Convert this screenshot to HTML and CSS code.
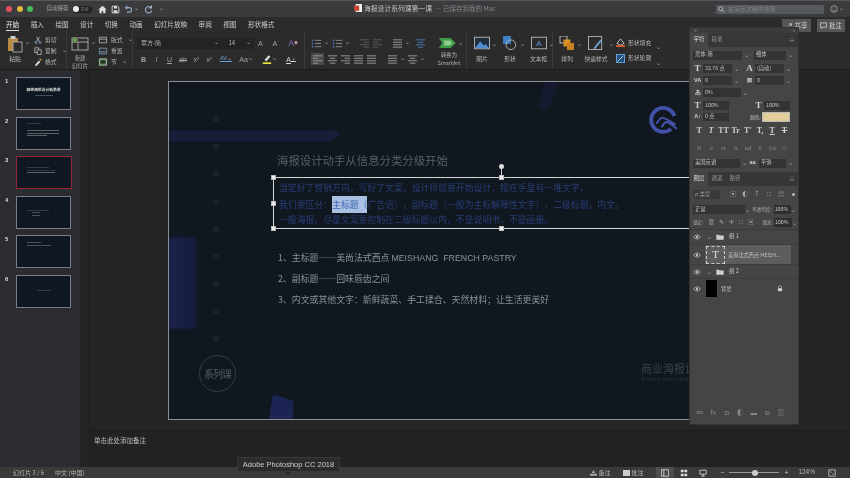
FILE: index.html
```html
<!DOCTYPE html>
<html lang="zh">
<head>
<meta charset="utf-8">
<title>海报设计系列课第一课</title>
<link rel="stylesheet" href="styles.css">
</head>
<body>
<svg class="defs" width="0" height="0">
  <symbol id="i-left" viewBox="0 0 12 12"><path d="M1 2h10M1 4.700h6M1 7.400h10M1 10h6" stroke="currentColor" fill="none"/></symbol>
  <symbol id="i-center" viewBox="0 0 12 12"><path d="M1 2h10M3 4.700h6M1 7.400h10M3 10h6" stroke="currentColor" fill="none"/></symbol>
  <symbol id="i-right" viewBox="0 0 12 12"><path d="M1 2h10M5 4.700h6M1 7.400h10M5 10h6" stroke="currentColor" fill="none"/></symbol>
  <symbol id="i-just" viewBox="0 0 12 12"><path d="M1 2h10M1 4.700h10M1 7.400h10M1 10h10" stroke="currentColor" fill="none"/></symbol>
  <symbol id="i-list" viewBox="0 0 14 12"><path d="M5 2h8M5 6h8M5 10h8" stroke="currentColor" fill="none"/><path d="M1 1h2v2H1zM1 5h2v2H1zM1 9h2v2H1z" fill="#4a79b8"/></symbol>
  <symbol id="i-eye" viewBox="0 0 12 8"><path d="M1 4c2.500-4 7.500-4 10 0-2.500 4-7.500 4-10 0z" fill="none" stroke="currentColor"/><circle cx="6" cy="4" r="1.600" fill="currentColor"/></symbol>
  <symbol id="i-folder" viewBox="0 0 12 9"><path d="M.5 8.500V1h4l1 1.300h6v6.200z" fill="currentColor"/></symbol>
</svg>

<div class="app">
  <header class="titlebar">
    <div class="tb-left">
      <span class="light red"></span><span class="light yellow"></span><span class="light green"></span>
      <span class="autosave">自动保存</span>
      <span class="toggle"><i></i><em>关闭</em></span>
      <svg class="qa q-home" viewBox="0 0 12 12"><path d="M6 1 .5 6H2v5h3V8h2v3h3V6h1.500z" fill="#ddd"/></svg>
      <svg class="qa" viewBox="0 0 12 12"><path d="M1.500 1.500h7l2 2v7h-9z" fill="none" stroke="#ddd" stroke-width="1.200"/><path d="M4 1.500h4v3H4zM3.500 7h5v3.500h-5z" fill="#ddd"/></svg>
      <svg class="qa" viewBox="0 0 12 12"><path d="M2 3.500h5a3 3 0 0 1 0 6H4M4.500 1 2 3.500 4.500 6" fill="none" stroke="#8fa9c4" stroke-width="1.400"/></svg>
      <span class="caret-s">⌄</span>
      <svg class="qa" viewBox="0 0 12 12"><path d="M9.500 3.500A4.300 4.300 0 1 0 10.500 7M10 .8v3H7" fill="none" stroke="#9fb4c9" stroke-width="1.400"/></svg>
      <span class="caret-s last">⌄</span>
    </div>
    <div class="tb-title">
      <svg class="docicon" viewBox="0 0 10 10"><rect x="2" y="0" width="8" height="10" fill="#eee"/><rect x="0" y="2" width="6.500" height="6.500" fill="#c8452f"/></svg>
      <span class="tb-name">海报设计系列课第一课</span><span class="tb-saved">— 已保存到我的 Mac</span>
    </div>
    <div class="tb-right">
      <div class="search"><svg class="mag" viewBox="0 0 10 10"><circle cx="4" cy="4" r="2.800" fill="none" stroke="#c5c8cc" stroke-width="1.200"/><path d="M6 6l3 3" stroke="#c5c8cc" stroke-width="1.200"/></svg><span>在演示文稿中搜索</span></div>
      <svg class="smile" viewBox="0 0 12 12"><circle cx="6" cy="6" r="5" fill="none" stroke="#bbb"/><path d="M3.500 7.500c1.500 1.500 3.500 1.500 5 0M4 4.500h1M7 4.500h1" stroke="#bbb" fill="none"/></svg>
      <span class="caret-s">⌄</span>
    </div>
  </header>

  <nav class="tabs">
    <span class="tab on">开始</span><span class="tab">插入</span><span class="tab">绘图</span><span class="tab">设计</span><span class="tab">切换</span><span class="tab">动画</span><span class="tab">幻灯片放映</span><span class="tab">审阅</span><span class="tab">视图</span><span class="tab">形状格式</span>
  </nav>

  <section class="ribbon">
    <div class="grp g-clip">
      <div class="big">
        <svg class="big-ic" viewBox="0 0 16 18"><rect x="1" y="3" width="10" height="13" fill="#b58a44"/><rect x="3.500" y="1" width="5" height="3" fill="#ccc"/><rect x="6" y="7" width="9" height="10" fill="#2c2c2c" stroke="#bbb" stroke-width=".8"/></svg>
        <span class="lbl">粘贴</span>
      </div>
      <span class="caret big-caret">⌄</span>
      <div class="stack">
        <span class="si"><svg viewBox="0 0 10 10"><path d="M3 1l4 6M7 1 3 7" stroke="#bbb" fill="none"/><circle cx="2.500" cy="8" r="1.300" fill="none" stroke="#7fa5d0"/><circle cx="7.500" cy="8" r="1.300" fill="none" stroke="#7fa5d0"/></svg>剪切</span>
        <span class="si"><svg viewBox="0 0 10 10"><path d="M1 1h5v6H1z" fill="none" stroke="#bbb"/><path d="M4 3.500h5v6H4z" fill="#2c2c2c" stroke="#bbb"/></svg>复制<b class="caret">⌄</b></span>
        <span class="si"><svg viewBox="0 0 10 10"><path d="M1 9 6 3l2 2-5 5z" fill="#ddd"/><path d="M6 1h3v3z" fill="#d6a63c"/></svg>格式</span>
      </div>
    </div>
    <div class="grp g-slide">
      <div class="big">
        <svg class="big-ic wide" viewBox="0 0 18 14"><rect x="1" y="1" width="16" height="12" fill="none" stroke="#a5a5a5"/><path d="M1 5h16M7 5v8" stroke="#a5a5a5"/><path d="M4 0v6M1 3h6" stroke="#6fb04f" stroke-width="1.400"/></svg>
        <span class="lbl two">新建<br>幻灯片</span>
      </div>
      <span class="caret big-caret">⌄</span>
      <div class="stack">
        <span class="si wide"><svg viewBox="0 0 10 10"><path d="M.5 1.500h9v7h-9zM.5 4h9" fill="none" stroke="#bbb"/></svg>版式<b class="caret">⌄</b></span>
        <span class="si wide"><svg viewBox="0 0 10 10"><path d="M.5 1.500h9v7h-9z" fill="none" stroke="#7fa5d0"/><path d="M2 6h6" stroke="#bbb"/></svg>重置</span>
        <span class="si wide"><svg viewBox="0 0 10 10"><path d="M.5 1h9v8h-9z" fill="#4c8a46" stroke="#bbb"/><path d="M2 3h6v4H2z" fill="#2c2c2c"/></svg>节<b class="caret">⌄</b></span>
      </div>
    </div>
    <div class="grp g-font">
      <div class="row">
        <span class="fontsel"><span>苹方-简</span><b class="caret">⌄</b></span>
        <span class="sizesel"><span>14</span><b class="caret">⌄</b></span>
        <span class="g w15">A<sup>ˆ</sup></span><span class="g w15">A<sup>ˇ</sup></span>
        <span class="g w22 clear">A<i>◆</i></span>
      </div>
      <div class="row r2">
        <span class="g w13 bd">B</span><span class="g w13 it">I</span><span class="g w13 ul">U</span><span class="g w14 st">ab</span><span class="g w13">x<sup>2</sup></span><span class="g w13">x<sub>2</sub></span>
        <span class="g w17 av">AV<b class="caret">⌄</b></span><span class="g w24">Aa<b class="caret">⌄</b></span>
        <span class="g w20"><svg class="hl" viewBox="0 0 12 12"><path d="M3 7 8 1.500l2 1.800L5 9z" fill="#ddd"/><rect x="1" y="10" width="10" height="2" fill="#e8e23a"/></svg><b class="caret">⌄</b></span>
        <span class="g w18 fc">A<b class="caret">⌄</b></span>
      </div>
    </div>
    <div class="grp g-para">
      <div class="pcol">
        <div class="row">
          <svg class="pi m1x"><use href="#i-list"/></svg><b class="caret cw">⌄</b>
          <svg class="pi m1x"><use href="#i-list"/></svg><b class="caret cw">⌄</b>
          <svg class="pi dim m7"><use href="#i-right"/></svg>
          <svg class="pi dim m2x"><use href="#i-left"/></svg>
          <svg class="pi m9"><use href="#i-just"/></svg><b class="caret cw">⌄</b>
          <svg class="pi blue m3x"><use href="#i-center"/></svg>
        </div>
        <div class="row r2">
          <span class="pa m1x"><svg class="pi"><use href="#i-left"/></svg></span>
          <svg class="pi m3x"><use href="#i-center"/></svg>
          <svg class="pi m2x"><use href="#i-right"/></svg>
          <svg class="pi m2x"><use href="#i-just"/></svg>
          <svg class="pi m2x"><use href="#i-just"/></svg>
          <svg class="pi m10"><use href="#i-just"/></svg><b class="caret cw">⌄</b>
          <svg class="pi"><use href="#i-center"/></svg><b class="caret cw">⌄</b>
        </div>
      </div>
      <div class="big smart">
        <svg class="sm-ic" viewBox="0 0 26 14"><path d="M1 1h14l6 6-6 6H1l4-6z" fill="#3f9a48"/><path d="M6 4h8l3 3-3 3H6l2-3z" fill="#8fd08a"/></svg>
        <span class="lbl two">转换为<br>SmartArt</span>
      </div>
      <span class="caret smart-c">⌄</span>
    </div>
    <div class="grp g-ins">
      <div class="big ins">
        <svg class="ins-ic" viewBox="0 0 18 14"><rect x=".5" y=".5" width="17" height="13" fill="#20303f" stroke="#bbb"/><path d="M1 13 7 5l4 5 2-2 4 5z" fill="#4f8fd0"/></svg>
        <span class="lbl">图片</span>
      </div><span class="caret">⌄</span>
      <div class="big ins">
        <svg class="ins-ic" viewBox="0 0 18 16"><rect x="1" y="0" width="9" height="9" fill="#3f7fc4"/><circle cx="10" cy="10" r="5.500" fill="none" stroke="#bbb"/></svg>
        <span class="lbl">形状</span>
      </div><span class="caret">⌄</span>
      <div class="big ins last">
        <svg class="ins-ic" viewBox="0 0 18 14"><rect x=".5" y=".5" width="17" height="13" fill="none" stroke="#bbb"/><text x="9" y="10.500" text-anchor="middle" font-size="9" fill="#5a9ae0" font-family="Liberation Sans">A</text></svg>
        <span class="lbl">文本框</span>
      </div><span class="caret">⌄</span>
    </div>
    <div class="grp g-draw">
      <div class="big ins">
        <svg class="ins-ic" viewBox="0 0 18 16"><rect x="1" y="0" width="8" height="8" fill="#2b2b2b" stroke="#ccc"/><rect x="5" y="4" width="8" height="8" fill="#d8922a"/><rect x="9" y="8" width="8" height="8" fill="#c98420"/></svg>
        <span class="lbl">排列</span>
      </div><span class="caret">⌄</span>
      <div class="big ins qs">
        <svg class="ins-ic" viewBox="0 0 18 16"><rect x=".5" y=".5" width="15" height="15" fill="none" stroke="#bbb"/><path d="M6 14 14 4l1.500 1.500L8 15z" fill="#6f9fd0"/></svg>
        <span class="lbl">快速样式</span>
      </div><span class="caret">⌄</span>
      <div class="stack fill">
        <span class="si"><svg viewBox="0 0 10 10"><path d="M5 1 9 6 5 8 1 6z" fill="none" stroke="#ccc"/><rect y="8" width="10" height="2" fill="#d8622f"/></svg>形状填充<b class="caret">⌄</b></span>
        <span class="si"><svg viewBox="0 0 10 10"><rect x=".5" y=".5" width="9" height="9" fill="#1f4f80" stroke="#6fa8e0"/><path d="M2 8 8 2" stroke="#ddd"/></svg>形状轮廓<b class="caret">⌄</b></span>
      </div>
    </div>
  </section>

  <main class="main">
    <aside class="sidebar">
      <div class="tr"><span class="n">1</span><div class="thumb t1"><span class="tt">释放海报设计新思维</span><span class="ts"></span></div></div>
      <div class="tr"><span class="n">2</span><div class="thumb t2"><span class="bar b0"></span><span class="bar b1"></span><span class="bar b2"></span><span class="bar b3"></span></div></div>
      <div class="tr"><span class="n">3</span><div class="thumb sel"><span class="bar b4"></span><span class="bar b5"></span><span class="bar b6"></span></div></div>
      <div class="tr"><span class="n">4</span><div class="thumb"><span class="bar b4"></span><span class="bar b7"></span><span class="bar b7"></span></div></div>
      <div class="tr"><span class="n">5</span><div class="thumb t5"><span class="bar b8"></span><span class="bar b9"></span></div></div>
      <div class="tr"><span class="n">6</span><div class="thumb t6"><span class="bar b10"></span></div></div>
    </aside>
    <div class="workspace">
      <div class="stage">
        <div class="slide">
          <i class="deco d-bar"></i><i class="deco d-left"></i><i class="deco d-bot"></i><i class="deco d-slash"></i>
          <div class="dots"><i></i><i></i><i></i><i></i><i></i><i></i><i></i><i></i><i></i></div>
          <svg class="q-logo" viewBox="0 0 34 34"><path d="M27 28A14 14 0 1 1 31 13" fill="none" stroke="#4450a6" stroke-width="4.500"/><path d="M10 22Q14 15 17 15T32 23M16 26Q19 20 22 20T34 28" fill="none" stroke="#4450a6" stroke-width="2.500"/></svg>
          <div class="bad"><span>系列课</span></div>
          <div class="wm"><span>商业海报设计</span><small>Business poster design</small></div>

          <h1 class="s-title">海报设计动手从信息分类分级开始</h1>
          <div class="s-box">
            <p>当定好了营销方向，写好了文案，设计师就要开始设计，摆在手里有一堆文字，</p>
            <p>我们要区分：<mark>主标题（</mark>广告语），副标题（一般为主标解释性文字），二级标题，内文。</p>
            <p>一般海报，尽量文案要控制在二级标题以内，不是说明书，不是画册。</p>
            <i class="h tl"></i><i class="h tc"></i><i class="h tr2"></i><i class="h ml0"></i><i class="h mr"></i><i class="h bl"></i><i class="h bc"></i><i class="h br"></i>
            <i class="stem"></i><i class="rot"></i>
          </div>
          <ol class="s-list">
            <li>1、主标题——美尚法式西点 <span class="lat">MEISHANG&nbsp; FRENCH PASTRY</span></li>
            <li>2、副标题——回味唇齿之间</li>
            <li>3、内文或其他文字：新鲜蔬菜、手工揉合、天然材料；让生活更美好</li>
          </ol>
        </div>
      </div>
      <div class="notes">单击此处添加备注</div>
    </div>
  </main>

  <footer class="status">
    <div class="st-left"><span>幻灯片 3 / 6</span><span>中文 (中国)</span></div>
    <div class="st-right">
      <span class="st-i"><svg class="nt" viewBox="0 0 10 8"><path d="M0 8h10V5H0zM3 4h4V2H3zM4.500 2V0h1v2z" fill="#aaa"/></svg>备注</span><span class="st-i cm"><i></i>批注</span>
      <span class="view on"><svg viewBox="0 0 10 10"><path d="M.5 1h9v8h-9zM3.500 1v8" fill="none" stroke="#ddd"/></svg></span>
      <span class="view"><svg viewBox="0 0 10 10"><path d="M1 1h3.500v3H1zM5.500 1H9v3H5.500zM1 6h3.500v3H1zM5.500 6H9v3H5.500z" fill="#ddd"/></svg></span>
      <span class="view"><svg viewBox="0 0 10 10"><path d="M1 1.500h8v5H1zM5 6.500V9M3 9h4" fill="none" stroke="#ddd"/></svg></span>
      <span class="zoom"><b>−</b><span class="track"><i></i></span><b>+</b></span>
      <span class="pct">124%</span>
      <span class="view"><svg viewBox="0 0 10 10"><path d="M1 1h8v8H1z" fill="none" stroke="#ccc"/><path d="M3 3h1.500v1.500H3zM5.500 5.500H7V7H5.500z" fill="#ccc"/></svg></span>
    </div>
  </footer>
</div>

<div class="share"><svg viewBox="0 0 8 8"><path d="M1 7h4M3 5l3-3M3.500 2H6v2.500" fill="none" stroke="#ccc"/></svg>共享</div>
<div class="comment"><svg viewBox="0 0 8 8"><path d="M.5 1h7v5H3L1.500 7.500V6h-1z" fill="none" stroke="#ccc"/></svg>批注</div>

<aside class="ps">
  <div class="ps-strip"><i>×</i><i>»</i></div>
  <div class="ps-tabs"><span class="on">字符</span><span>段落</span><em>≡</em></div>
  <div class="ps-char">
    <div class="pr h14"><span class="f a1">黑体-简</span><b>⌄</b><span class="f a2">细体</span><b>⌄</b></div>
    <div class="pr h13"><u class="ti">T</u><span class="f s1">32.76 点</span><b>⌄</b><u class="ti ti2">A</u><span class="f s1">(自动)</span><b>⌄</b></div>
    <div class="pr h11"><u class="ti sm">VA</u><span class="f s1">0</span><b>⌄</b><u class="ti sm ti2">⊠</u><span class="f s1">0</span><b>⌄</b></div>
    <div class="pr h13"><u class="ti sm">あ</u><span class="f s3">0%</span><b>⌄</b></div>
    <div class="pr h13"><u class="ti">T</u><span class="f s4">100%</span><u class="ti tw">T</u><span class="f s4">100%</span></div>
    <div class="pr h10"><u class="ti sm">A↕</u><span class="f s4">0 点</span><span class="clbl">颜色:</span><span class="swatch"></span></div>
    <div class="pr tt-row"><span>T</span><span class="i">T</span><span>TT</span><span>Tr</span><span>T'</span><span>T,</span><span class="u">T</span><span class="s">T</span></div>
    <div class="pr tt-row dim"><span>fi</span><span>σ</span><span>st</span><span>A</span><span>ad</span><span>T</span><span>1st</span><span>½</span></div>
    <div class="pr h14"><span class="f l1">美国英语</span><b>⌄</b><u class="ti sm tl2">aa</u><span class="f l2">平滑</span><b>⌄</b></div>
  </div>
  <div class="ps-tabs"><span class="on">图层</span><span>通道</span><span>路径</span><em>≡</em></div>
  <div class="ps-layers">
    <div class="pr l-search"><span class="f q">ρ 类型</span><span class="fi-ic">▣</span><span class="fi-ic">◐</span><span class="fi-ic">T</span><span class="fi-ic">⛶</span><span class="fi-ic">▤</span><i class="dotg"></i></div>
    <div class="pr l-mode"><span class="f m1">正常</span><b>⌄</b><span class="lab">不透明度:</span><span class="f m2">100%</span><b>⌄</b></div>
    <div class="pr l-lock"><span class="lab">锁定:</span><span class="fi-ic">▦</span><span class="fi-ic">✎</span><span class="fi-ic">✛</span><span class="fi-ic">⛶</span><span class="fi-ic">▣</span><span class="lab ll">填充:</span><span class="f m3">100%</span><b>⌄</b></div>
    <div class="lay gr g1"><svg class="eye"><use href="#i-eye"/></svg><span class="tw2">⌄</span><svg class="fold"><use href="#i-folder"/></svg><span>组 1</span></div>
    <div class="lay txt"><svg class="eye"><use href="#i-eye"/></svg><span class="tthumb">T</span><span class="ln">美尚法式西点 MEISH...</span></div>
    <div class="lay gr g2"><svg class="eye"><use href="#i-eye"/></svg><span class="tw2">⌄</span><svg class="fold"><use href="#i-folder"/></svg><span>组 2</span></div>
    <div class="lay bgl"><svg class="eye"><use href="#i-eye"/></svg><span class="bthumb"></span><span class="ln">背景</span><svg class="lock" viewBox="0 0 10 10"><path d="M2.500 4.500v-2a2.500 2 0 0 1 5 0v2" fill="none" stroke="#ccc"/><rect x="1.500" y="4.500" width="7" height="5" fill="#ccc"/></svg></div>
    <div class="l-foot"><span>∞</span><span>fx</span><span>◘</span><span>◐</span><span>▬</span><span>⧉</span><span>▥</span></div>
  </div>
</aside>

<div class="tooltip">Adobe Photoshop CC 2018</div>
</body>
</html>
```

FILE: styles.css
```css
* { box-sizing: border-box; }
html, body { margin: 0; padding: 0; width: 850px; height: 478px; overflow: hidden; background: #232323; }
body { position: relative; font-family: "Noto Sans CJK SC", "Liberation Sans", sans-serif; color: #ccc; font-size: 7px; line-height: 1; filter: blur(.5px); text-spacing-trim: space-all; }
.defs { position: absolute; }
svg { display: block; flex: none; }
sup, sub { font-size: 60%; line-height: 0; }
.caret, .caret-s { font-weight: 400; font-size: 6px; color: #aaa; line-height: 1; transform: translateY(-1px); }

.app { width: 850px; height: 478px; display: flex; flex-direction: column; }

/* title bar */
.titlebar { height: 17px; flex: none; background: #3b3b3d; display: flex; align-items: center; position: relative; padding-left: 6px; border-top: 1px solid #55565a; }
.tb-left { display: flex; align-items: center; }
.light { width: 6px; height: 6px; border-radius: 50%; margin-right: 4.500px; }
.red { background: #e0525e; } .yellow { background: #dfb73c; } .green { background: #45bb5a; }
.autosave { font-size: 5.500px; color: #a8a8a8; margin-left: 9px; width: 26px; }
.toggle { width: 19px; height: 7px; background: #222; border-radius: 4px; display: flex; align-items: center; gap: 2px; }
.toggle i { width: 6px; height: 6px; background: #eee; border-radius: 50%; }
.toggle em { font-style: normal; font-size: 4px; color: #888; }
.qa { width: 9px; height: 9px; margin-left: 4px; }
.q-home { margin-left: 6px; }
.caret-s { margin: 0 1px; }
.caret-s.last { margin-left: 6px; }
.tb-title { flex: none; position: absolute; left: 354px; top: 3px; display: flex; align-items: center; font-size: 7px; }
.docicon { width: 8px; height: 8px; margin-right: 2px; }
.tb-name { color: #c4c4c4; font-size: 6.800px; }
.tb-saved { color: #85878a; font-size: 6.500px; margin-left: 3px; }
.tb-right { margin-left: auto; display: flex; align-items: center; padding-right: 5px; }
.search { width: 108px; height: 9px; background: #56595d; border-radius: 1px; display: flex; align-items: center; padding-left: 2px; gap: 3px; margin-right: 6px; }
.search span { font-size: 6px; color: #7f8388; }
.mag { width: 7px; height: 7px; }
.smile { width: 8px; height: 8px; }

/* tabs */
.tabs { height: 14px; flex: none; background: #2b2b2b; display: flex; align-items: center; padding-left: 6px; gap: 11.500px; font-size: 6.600px; color: #cfcfcf; }
.tab { height: 14px; line-height: 15px; }
.tab.on { color: #eee; box-shadow: inset 0 -1px 0 #ddd; }

/* ribbon */
.ribbon { height: 39px; flex: none; background: #2b2b2b; display: flex; border-bottom: 1px solid #1b1b1b; font-size: 5.800px; color: #b5b5b5; }
.grp { height: 38px; display: flex; align-items: flex-start; border-right: 1px solid #3b3b3b; flex: none; }
.big { display: flex; flex-direction: column; align-items: center; }
.big-ic { width: 16px; height: 18px; margin-top: 4px; }
.big-ic.wide { width: 18px; height: 14px; }
.lbl { margin-top: 3px; line-height: 6.500px; text-align: center; white-space: nowrap; }
.lbl.two { font-size: 5.300px; line-height: 7.500px; }
.big-caret { margin: 9px 1px 0 2px; }
.stack { display: flex; flex-direction: column; gap: 3.500px; padding-top: 5px; }
.si { height: 7.500px; display: flex; align-items: center; gap: 3px; white-space: nowrap; }
.si svg { width: 8px; height: 8px; }
.si .caret { margin-left: 2px; }
.g-clip { width: 67px; padding-left: 7px; }
.g-clip .stack { margin-left: 3px; }
.g-slide { width: 66px; padding-left: 4px; }
.g-slide .big { width: 20px; }
.g-slide .big-ic { margin-top: 6px; }
.g-slide .lbl { margin-top: 4px; }
.g-slide .stack { margin-left: 1px; }
.si.wide svg { width: 10px; height: 8px; }
.g-font { width: 172px; padding: 4px 0 0 4px; display: block; }
.row { height: 16px; display: flex; align-items: center; }
.fontsel { width: 88px; height: 11px; background: #232323; display: flex; align-items: center; justify-content: space-between; padding: 0 3px 0 4px; font-size: 6px; }
.sizesel { width: 32px; height: 11px; background: #232323; display: flex; align-items: center; justify-content: space-between; padding: 0 3px 0 6px; font-size: 6px; }
.g { text-align: center; font-family: "Liberation Sans", sans-serif; font-size: 7px; display: flex; align-items: center; justify-content: center; color: #a2a2a2; }
.w13 { width: 13px; } .w14 { width: 14px; } .w15 { width: 15px; } .w17 { width: 20px; } .w18 { width: 18px; } .w20 { width: 26px; } .w22 { width: 22px; } .w24 { width: 20px; }
.bd { font-weight: 700; } .it { font-style: italic; } .ul { text-decoration: underline; } .st { text-decoration: line-through; }
.r2 .g { height: 14px; }
.clear { color: #8a6fc0; font-size: 9px; }
.clear i { font-size: 4px; font-style: normal; color: #c9a; }
.av { color: #6b9fd4; text-decoration: underline; font-size: 5.500px; }
.hl { width: 10px; height: 10px; }
.fc { color: #ddd; text-decoration: underline; }
.g-para { width: 162px; padding: 4px 0 0 5px; }
.pcol { width: 122px; }
.pi { width: 11px; height: 11px; color: #9d9d9d; }
.dim { color: #5f5f5f; }
.blue { color: #4d7fb5; }
.cw { width: 9px; text-align: center; }
.m1x { margin-left: 1px; } .m2x { margin-left: 2px; } .m3x { margin-left: 3px; } .m7 { margin-left: 7px; } .m9 { margin-left: 9px; } .m10 { margin-left: 10px; }
.pa { background: #4a4a4a; width: 13px; height: 12px; display: flex; align-items: center; justify-content: center; }
.smart { width: 32px; margin-left: 1px; }
.sm-ic { width: 22px; height: 12px; margin-top: 2px; }
.smart .lbl { margin-top: 3px; }
.smart-c { margin: 6px 0 0 -7px; }
.g-ins { width: 86px; padding-left: 7px; }
.ins { width: 16px; }
.ins-ic { width: 16px; height: 14px; margin-top: 5px; }
.ins .lbl { margin-top: 6px; }
.g-ins .caret { margin: 11px 5px 0 2px; }
.g-draw .caret { margin: 11px 1px 0 2px; }
.ins.last { width: 18px; }
.g-draw { border: 0; padding-left: 6px; }
.qs { width: 22px; margin-left: 2px; }
.fill { margin-left: 1px; gap: 8px; padding-top: 8px; }
.fill .si svg { width: 9px; height: 9px; }

/* main */
.main { flex: 1; display: flex; min-height: 0; }
.sidebar { width: 80px; flex: none; background: #2a2c31; padding-top: 7px; display: flex; flex-direction: column; gap: 6.500px; }
.tr { display: flex; height: 33px; padding-left: 5px; }
.n { width: 11px; font-size: 6px; font-family: "Liberation Sans", sans-serif; font-weight: 700; color: #ddd; padding-top: 1px; }
.thumb { width: 55px; height: 33px; background: #0f1722; border: 1px solid #7c7c84; display: flex; flex-direction: column; align-items: flex-start; padding: 13px 0 0 10px; gap: 1.500px; }
.thumb.sel { border: 1.500px solid #8f2833; width: 56px; padding-top: 10px; }
.t1 { align-items: center; padding: 10px 0 0; }
.tt { font-size: 3.800px; font-weight: 700; color: #dcdcdc; white-space: nowrap; }
.ts { display: block; width: 18px; height: 1px; background: #474d5a; margin-top: 2px; }
.bar { display: block; height: 1px; background: #5d6269; }
.t2 { padding-top: 5px; }
.b0 { width: 14px; background: #333841; margin-bottom: 5px; }
.b1 { width: 32px; } .b2 { width: 32px; } .b3 { width: 20px; }
.b4 { width: 22px; background: #333841; } .b5 { width: 30px; background: #2a3450; } .b6 { width: 28px; background: #5d6269; }
.b7 { width: 8px; margin-left: 5px; background: #4d5259; }
.t5 { padding-top: 6px; }
.b8 { width: 14px; background: #4d5259; } .b9 { width: 24px; background: #4d5259; }
.t6 { padding: 14px 0 0 20px; } .b10 { width: 14px; background: #333841; }
.workspace { flex: 1; display: flex; flex-direction: column; min-width: 0; margin-left: 9px; border-left: 1px solid #1f1f1f; }
.stage { height: 361px; flex: none; background: #252525; padding: 11px 0 0 78px; overflow: hidden; border-bottom: 1px solid #1b1b1b; }
.notes { flex: 1; background: #222; font-size: 6.500px; color: #bdbdbd; padding: 6px 0 0 4px; }

/* slide: a free canvas */
.slide { width: 602px; height: 339px; background: #10171f; border: 1px solid #8c9096; position: relative; overflow: hidden; }
.deco { position: absolute; filter: blur(1.500px); }
.d-bar { left: -1px; top: 48px; width: 172px; height: 12px; background: #181e3a; clip-path: polygon(0 0, 94% 0, 97% -20%, 100% 40%, 94% 100%, 0 100%); }
.d-left { left: -1px; top: 155px; width: 28px; height: 92px; background: linear-gradient(90deg, #1b224c, #161c3c); }
.d-bot { left: 99px; top: 312px; width: 26px; height: 30px; background: #1c2454; clip-path: polygon(20% 0, 100% 25%, 95% 100%, 0 100%); }
.d-slash { left: 369px; top: -2px; width: 22px; height: 30px; background: #151a2e; clip-path: polygon(30% 0, 100% 0, 45% 100%, 0 100%); }
.dots { position: absolute; left: 44px; top: 34px; display: flex; flex-direction: column; gap: 22px; }
.dots i { display: block; width: 6px; height: 5.500px; background: #1a212b; border-radius: 1px; }
.q-logo { position: absolute; left: 479px; top: 23px; width: 29px; height: 29px; }
.bad { position: absolute; left: 30px; top: 273px; width: 37px; height: 37px; border: 1px solid #343b44; border-radius: 50%; display: flex; align-items: center; justify-content: center; }
.bad span { font-size: 10px; color: #555a60; letter-spacing: -1px; white-space: nowrap; }
.wm { position: absolute; left: 472px; top: 281px; display: flex; flex-direction: column; gap: 3px; white-space: nowrap; }
.wm span { font-size: 11px; color: #3c4149; }
.wm small { font-size: 5px; color: #2c3139; font-family: "Liberation Sans", sans-serif; }
.s-title { position: absolute; left: 108px; top: 70px; margin: 0; font-size: 11.400px; line-height: 16px; font-weight: 400; color: #5a5f66; white-space: nowrap; }
.s-box { position: absolute; left: 104px; top: 95px; width: 456px; height: 52px; border: 1px solid #d5d7da; padding: 2px 0 0 5px; color: #293e78; font-size: 8.850px; white-space: nowrap; }
.s-box p { margin: 0; height: 16px; line-height: 16px; }
.s-box mark { background: #a9c0e2; color: #3f66b2; display: inline-block; height: 17px; line-height: 17px; }
.h { position: absolute; width: 5px; height: 5px; background: #eee; border: 1px solid #bbb; }
.tl { left: -3px; top: -3px; } .tc { left: 225px; top: -3px; } .tr2 { right: -3px; top: -3px; }
.ml0 { left: -3px; top: 23px; } .mr { right: -3px; top: 23px; }
.bl { left: -3px; bottom: -3px; } .bc { left: 225px; bottom: -3px; } .br { right: -3px; bottom: -3px; }
.stem { position: absolute; left: 227px; top: -10px; width: 1px; height: 8px; background: #ccc; }
.rot { position: absolute; left: 225px; top: -14px; width: 5px; height: 5px; border-radius: 50%; background: #ddd; }
.s-list { position: absolute; left: 109px; top: 165px; margin: 0; padding: 0; list-style: none; font-size: 8.900px; color: #8d9298; white-space: nowrap; }
.s-list li { height: 21px; line-height: 21px; }
.lat { font-family: "Liberation Sans", sans-serif; font-size: 8.800px; }

/* status */
.status { height: 11px; flex: none; background: #3a3a3a; display: flex; align-items: center; justify-content: space-between; font-size: 6px; color: #b5b5b5; }
.st-left { display: flex; gap: 11px; padding-left: 13px; }
.st-right { display: flex; align-items: center; padding-right: 8px; }
.st-i { margin-right: 12px; display: flex; align-items: center; gap: 2px; white-space: nowrap; }
.nt { width: 7px; height: 6px; }
.cm i { width: 7px; height: 6px; background: #ccc; }
.view { width: 18px; height: 11px; display: flex; align-items: center; justify-content: center; margin-right: 1px; }
.view svg { width: 8px; height: 8px; }
.view.on { background: #4d4d4d; }
.zoom { display: flex; align-items: center; gap: 5px; margin-left: 8px; }
.zoom b { font-weight: 400; color: #ccc; font-size: 7px; }
.track { width: 50px; height: 1px; background: #999; position: relative; display: block; }
.track i { position: absolute; left: 23px; top: -2.500px; width: 6px; height: 6px; border-radius: 50%; background: #ccc; }
.pct { margin: 0 8px 0 10px; font-family: "Liberation Sans", sans-serif; font-size: 6.500px; }

/* floating bits over the window */
.share, .comment { position: absolute; top: 19px; height: 13px; background: #555; color: #d0d0d0; font-size: 6.500px; line-height: 6.500px; display: flex; align-items: flex-start; justify-content: center; gap: 2px; padding-top: 3px; }
.share svg, .comment svg { width: 7px; height: 7px; }
.share { left: 782px; width: 29px; }
.comment { left: 817px; width: 28px; }
.tooltip { position: absolute; left: 237px; top: 457px; width: 103px; height: 15px; background: #2b2b2b; border: 1px solid #3a3a3a; font-family: "Liberation Sans", sans-serif; font-size: 7.500px; color: #ccc; text-align: center; line-height: 13px; }
.tooltip::after { content: ""; position: absolute; left: 47px; top: 14px; border: 3px solid transparent; border-top-color: #2b2b2b; }

/* photoshop panel */
.ps { position: absolute; left: 689px; top: 27px; width: 110px; height: 398px; background: #454545; font-size: 5.500px; color: #c4c4c4; border: 1px solid #333; display: flex; flex-direction: column; }
.ps-strip { height: 5px; flex: none; background: #3c3c3c; display: flex; justify-content: space-between; padding: 0 3px; font-size: 4.500px; color: #999; }
.ps-strip i { font-style: normal; }
.ps-tabs { height: 14px; flex: none; background: #373737; display: flex; align-items: stretch; position: relative; }
.ps-tabs span { width: 18px; display: flex; align-items: center; justify-content: center; color: #999; }
.ps-tabs span.on { background: #454545; color: #ddd; }
.ps-tabs em { position: absolute; right: 3px; top: 4px; font-style: normal; font-size: 6px; color: #999; }
.ps-char { height: 125px; flex: none; padding: 1px 3px 0; }
.pr { display: flex; align-items: center; }
.h14 { height: 14px; } .h13 { height: 13px; } .h11 { height: 11px; } .h10 { height: 10px; }
.pr b { width: 8px; font-weight: 400; font-size: 6px; text-align: center; color: #aaa; }
.f { height: 9px; background: #333; display: flex; align-items: center; padding-left: 2px; white-space: nowrap; font-size: 5.300px; flex: none; }
.h11 .f, .h10 .f { height: 8.500px; }
.a1 { width: 49px; } .a2 { width: 32px; margin-left: 4px; }
.ti { width: 9px; text-decoration: none; font-family: "Liberation Serif", serif; font-size: 9px; font-weight: 700; text-align: center; color: #cfcfcf; margin-right: 1px; white-space: nowrap; }
.ti.sm { font-size: 5.500px; font-family: "Liberation Sans", sans-serif; }
.ti2 { margin-left: 5px; }
.s1 { width: 29px; }
.s3 { width: 38px; }
.s4 { width: 26px; }
.tw { margin-left: 25px; }
.clbl { margin-left: 21px; width: 12px; white-space: nowrap; font-size: 4.800px; }
.swatch { width: 28px; height: 10px; background: #e2cd9b; border: 1px solid #bbb; }
.tt-row { height: 18px; font-family: "Liberation Serif", serif; font-size: 8px; font-weight: 700; color: #cfcfcf; }
.tt-row span { width: 12.200px; text-align: center; }
.tt-row.dim { color: #777; font-size: 6.500px; height: 16px; }
.tt-row .i { font-style: italic; } .tt-row .u { text-decoration: underline; } .tt-row .s { text-decoration: line-through; }
.l1 { width: 47px; } .l2 { width: 27px; }
.tl2 { margin-right: 2px; }
.ps-layers { flex: 1; display: flex; flex-direction: column; min-height: 0; }
.l-search { padding: 0 3px; height: 17px; gap: 6px; }
.q { width: 27px; background: #3a3a3a; color: #999; margin-right: 4px; }
.fi-ic { font-size: 5.500px; color: #aaa; width: 6px; text-align: center; display: flex; justify-content: center; }
.dotg { width: 3px; height: 3px; background: #bbb; border-radius: 50%; margin-left: 2px; }
.l-mode { padding: 0 3px; height: 13px; }
.m1 { width: 52px; }
.lab { margin: 0 2px; white-space: nowrap; color: #aaa; font-size: 4.600px; }
.m2 { width: 17px; background: #2f2f2f; padding-left: 1px; }
.m3 { width: 18px; background: #2f2f2f; padding-left: 1px; margin-left: -4px; }
.l-lock { padding: 0 3px; height: 14px; gap: 5px; border-bottom: 1px solid #3b3b3b; }
.l-lock .lab { margin: 0; width: 11px; }
.l-lock .ll { margin-left: 4px; width: 14px; }
.l-lock b { margin-left: -5px; }
.lay { display: flex; align-items: center; border-bottom: 1px solid #3c3c3c; position: relative; flex: none; }
.g1 { height: 15px; }
.g2 { height: 14px; }
.eye { width: 8px; height: 6px; color: #d6d6d6; margin: 0 6px 0 3px; position: relative; }
.tw2 { font-size: 6px; color: #aaa; width: 7px; }
.fold { width: 8px; height: 6px; color: #cfcfcf; margin: 0 5px 0 2px; }
.txt { height: 20px; }
.txt::before { content: ""; position: absolute; left: 15px; right: 7px; top: 0; bottom: 0; background: #5d5d5d; }
.tthumb { position: relative; width: 19px; height: 18px; margin-left: -1px; border: 1px dashed #ccc; font-family: "Liberation Serif", serif; font-size: 11px; display: flex; align-items: center; justify-content: center; color: #ddd; }
.ln { position: relative; margin-left: 3px; white-space: nowrap; font-size: 5.200px; }
.bgl { height: 19px; border-bottom: 0; }
.bthumb { width: 11px; height: 17px; margin-left: -1px; background: #000; }
.bgl .ln { margin-left: 4px; }
.lock { width: 6px; height: 7px; position: absolute; right: 15px; top: 6px; }
.l-foot { margin-top: auto; height: 23px; display: flex; align-items: center; padding-left: 3px; color: #8a8a8a; font-size: 6.500px; }
.l-foot span { width: 13.500px; text-align: center; }
```
